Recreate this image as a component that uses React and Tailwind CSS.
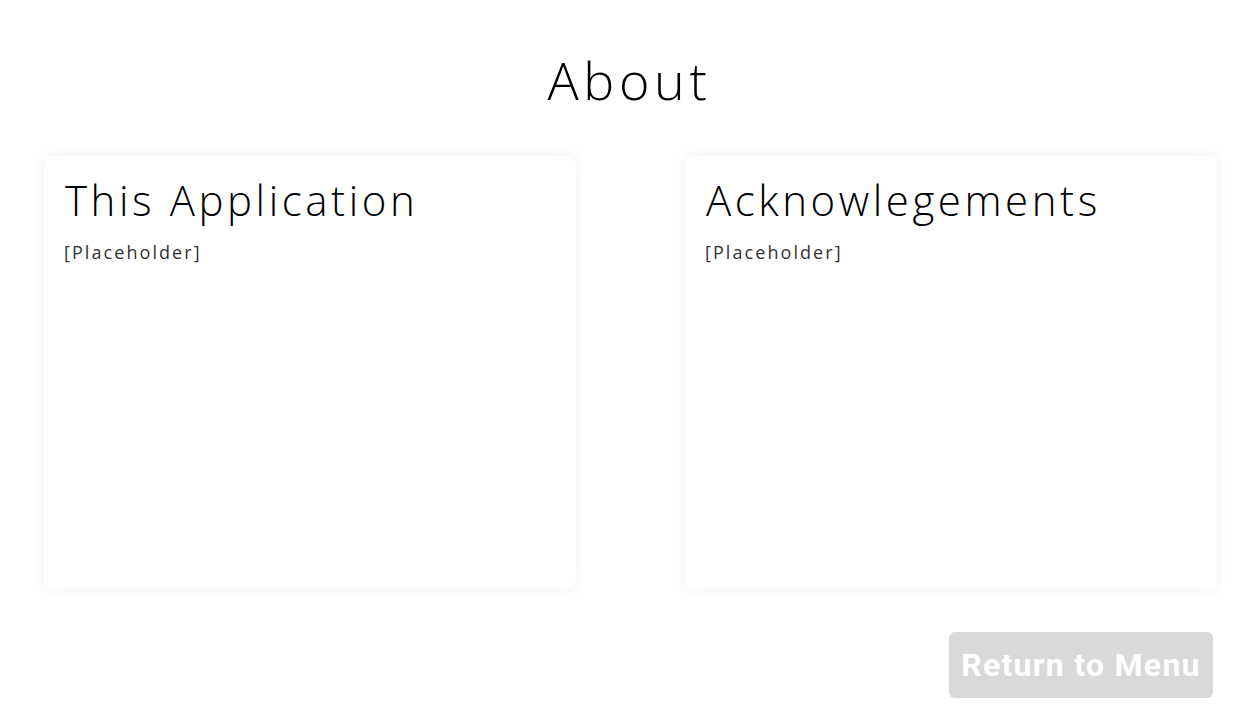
export default function App() {
  const font = { fontFamily: '"Open Sans", "Liberation Sans", sans-serif' };
  return (
    <div className="w-[1253px] h-[709px] bg-white flex flex-col" style={font}>
      <h1 className="text-center text-[52px] font-light text-black leading-none pt-[54px] tracking-[0.09em] pl-[6px]">About</h1>
      <div className="flex pl-[44px] gap-[109px] mt-[50px]">
        {["This Application", "Acknowlegements"].map((t) => (
          <div key={t} className="w-[532px] h-[433px] bg-white rounded-lg shadow-[0_0_12px_rgba(0,0,0,0.06)] px-[21px] pt-[23px]">
            <h2 className="text-[42px] font-light text-black leading-none tracking-[0.085em]">{t}</h2>
            <p className="text-[18px] leading-[27px] font-normal text-[#333] mt-[18px] tracking-[0.115em] -ml-[1px]">[Placeholder]</p>
          </div>
        ))}
      </div>
      <div className="flex justify-end pr-[40px] mt-[43px]">
        <button className="w-[264px] h-[66px] rounded-md bg-[#d9d9d9] text-white text-[32px] font-bold tracking-[0.04em]" style={{ fontFamily: 'Roboto, sans-serif' }}>Return to Menu</button>
      </div>
    </div>
  );
}
